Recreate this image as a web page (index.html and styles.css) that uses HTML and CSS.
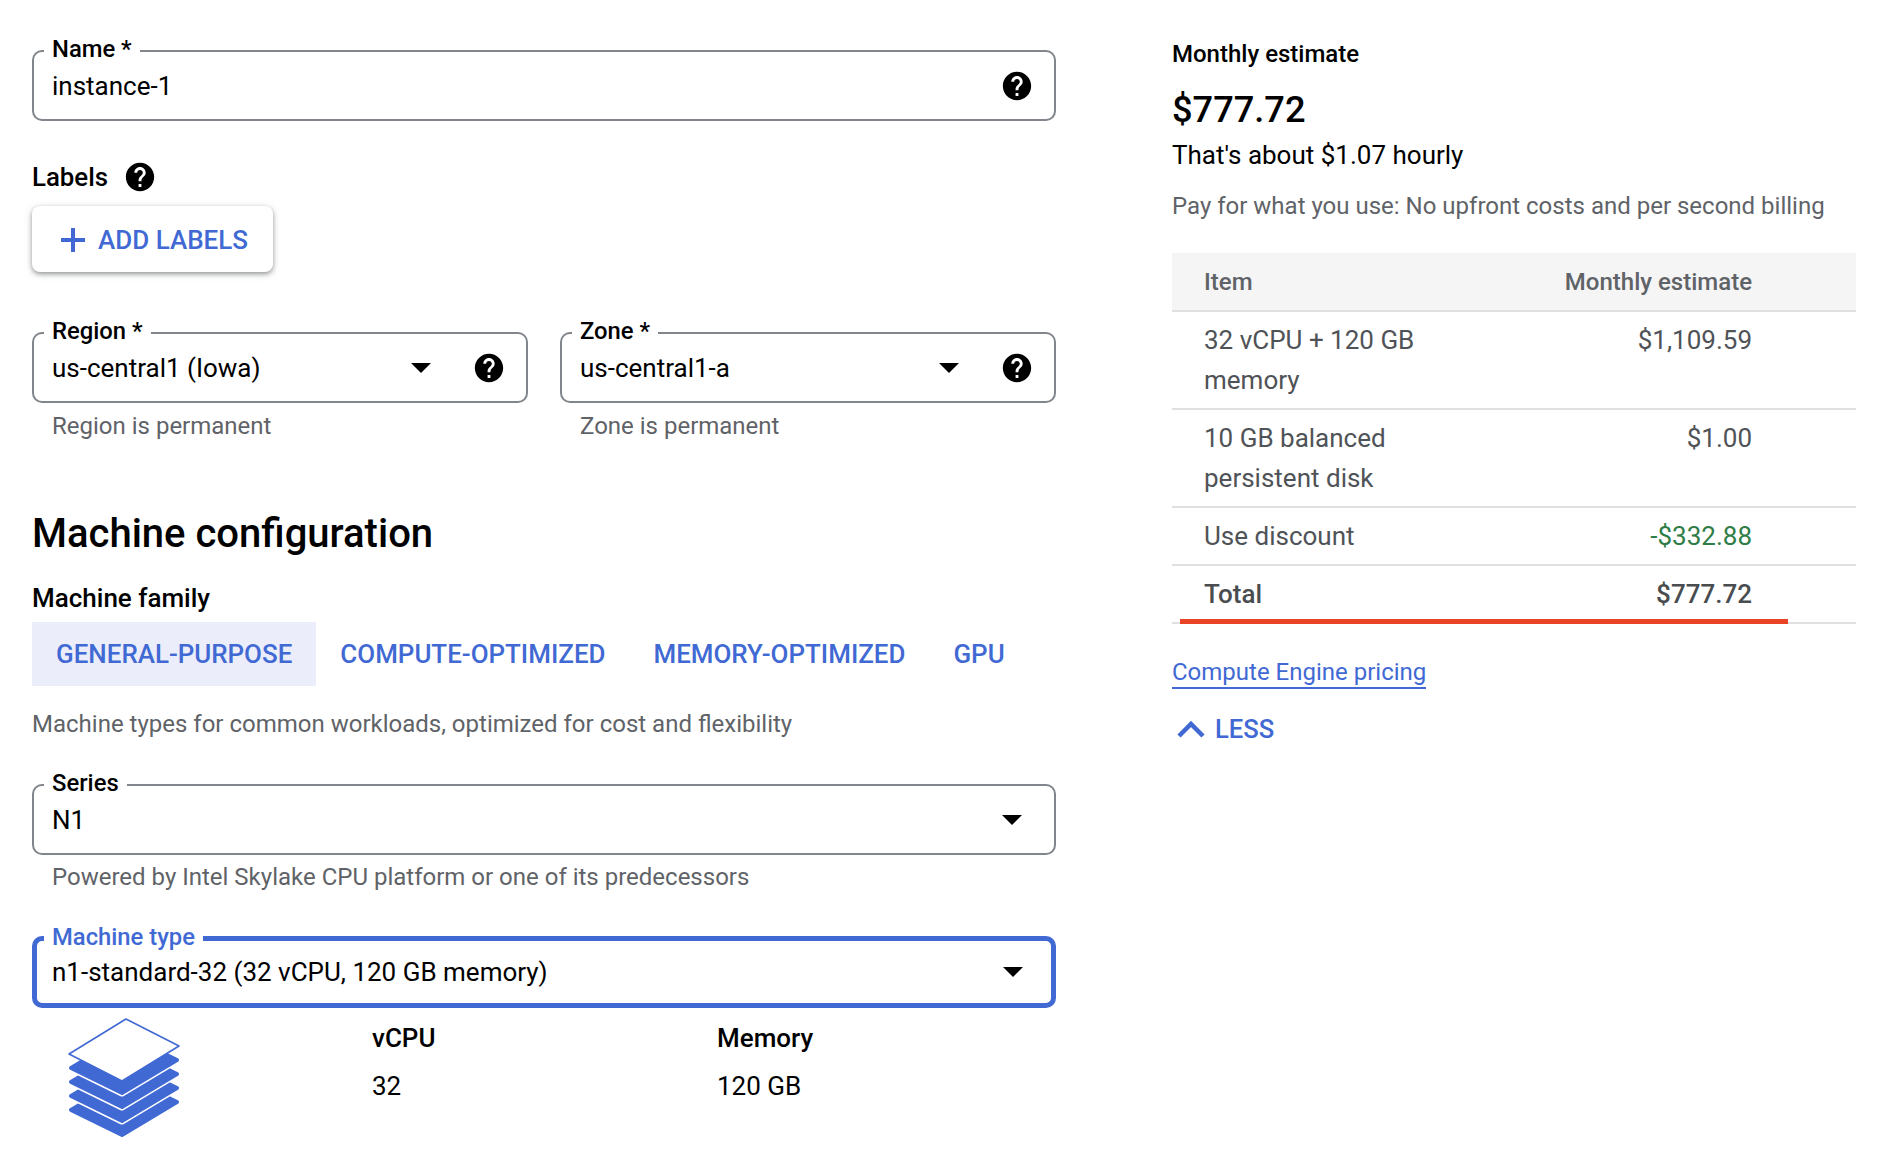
FILE: index.html
```html
<!DOCTYPE html>
<html>
<head>
  <meta charset="utf-8">
  <title>Create an instance</title>
  <link rel="stylesheet" href="styles.css">
</head>
<body>
  <svg class="defs" width="0" height="0">
    <defs>
      <symbol id="help" viewBox="0 0 24 24"><path d="M12 2C6.48 2 2 6.48 2 12s4.48 10 10 10 10-4.48 10-10S17.52 2 12 2zm1 17h-2v-2h2v2zm2.07-7.75l-.9.92C13.45 12.9 13 13.5 13 15h-2v-.5c0-1.1.45-2.1 1.17-2.83l1.24-1.26c.37-.36.59-.86.59-1.41 0-1.1-.9-2-2-2s-2 .9-2 2H8c0-2.21 1.79-4 4-4s4 1.79 4 4c0 .88-.36 1.68-.93 2.25z"/></symbol>
      <g id="layer">
        <polygon class="layer-gap" points="66,6 117,31 62,64 11,39"/>
        <polygon class="layer-fill" points="66,6 117,31 62,64 11,39"/>
      </g>
    </defs>
  </svg>

  <main class="form">
    <fieldset class="field field-name">
      <legend>Name *</legend>
      <span class="value">instance-1</span>
      <svg class="help"><use href="#help"/></svg>
    </fieldset>

    <div class="labels-head">
      <span>Labels</span>
      <svg class="help"><use href="#help"/></svg>
    </div>
    <button class="add-btn">
      <svg class="plus" viewBox="0 0 24 24"><path d="M10 0h4v10h10v4H14v10h-4V14H0v-4h10z"/></svg>
      ADD LABELS
    </button>

    <div class="field-row">
      <div class="field-col">
        <fieldset class="field">
          <legend>Region *</legend>
          <span class="value">us-central1 (Iowa)</span>
          <i class="caret caret-help"></i>
          <svg class="help"><use href="#help"/></svg>
        </fieldset>
        <p class="hint">Region is permanent</p>
      </div>
      <div class="field-col">
        <fieldset class="field">
          <legend>Zone *</legend>
          <span class="value">us-central1-a</span>
          <i class="caret caret-help"></i>
          <svg class="help"><use href="#help"/></svg>
        </fieldset>
        <p class="hint">Zone is permanent</p>
      </div>
    </div>

    <h2 class="section-title">Machine configuration</h2>
    <div class="sub-title">Machine family</div>
    <div class="tabs">
      <a class="tab active">GENERAL-PURPOSE</a>
      <a class="tab">COMPUTE-OPTIMIZED</a>
      <a class="tab">MEMORY-OPTIMIZED</a>
      <a class="tab">GPU</a>
    </div>
    <p class="tab-note">Machine types for common workloads, optimized for cost and flexibility</p>

    <fieldset class="field field-series">
      <legend>Series</legend>
      <span class="value">N1</span>
      <i class="caret"></i>
    </fieldset>
    <p class="hint">Powered by Intel Skylake CPU platform or one of its predecessors</p>

    <fieldset class="field field-focus">
      <legend>Machine type</legend>
      <span class="value">n1-standard-32 (32 vCPU, 120 GB memory)</span>
      <i class="caret"></i>
    </fieldset>

    <div class="specs">
      <svg class="stack" viewBox="0 0 130 125">
        <use href="#layer" y="56"/>
        <use href="#layer" y="42"/>
        <use href="#layer" y="28"/>
        <use href="#layer" y="14"/>
        <polygon class="layer-top" points="66,4 119,31 62,66 9,39"/>
      </svg>
      <div class="spec">
        <div class="spec-name">vCPU</div>
        <div class="spec-value">32</div>
      </div>
      <div class="spec">
        <div class="spec-name">Memory</div>
        <div class="spec-value">120 GB</div>
      </div>
    </div>
  </main>

  <aside class="estimate">
    <div class="est-label">Monthly estimate</div>
    <div class="est-price">$777.72</div>
    <div class="est-hourly">That's about $1.07 hourly</div>
    <p class="est-note">Pay for what you use: No upfront costs and per second billing</p>

    <div class="table-wrap">
      <table class="cost">
        <thead>
          <tr><th>Item</th><th class="num">Monthly estimate</th></tr>
        </thead>
        <tbody>
          <tr><td>32 vCPU + 120 GB memory</td><td class="num">$1,109.59</td></tr>
          <tr><td>10 GB balanced persistent disk</td><td class="num">$1.00</td></tr>
          <tr class="short"><td>Use discount</td><td class="num discount">-$332.88</td></tr>
          <tr class="short total"><td>Total</td><td class="num">$777.72</td></tr>
        </tbody>
      </table>
      <div class="red-line"></div>
    </div>

    <a class="pricing">Compute Engine pricing</a>
    <a class="less">
      <svg class="chevron" viewBox="0 0 28 18"><path d="M2 16 14 4l12 12"/></svg>
      LESS
    </a>
  </aside>
</body>
</html>
```

FILE: styles.css
```css
* { box-sizing: border-box; }

html { background: #fff; }

body {
  margin: 0;
  width: 1882px;
  height: 1154px;
  overflow: hidden;
  display: flex;
  padding-left: 32px;
  font-family: Roboto, "Liberation Sans", sans-serif;
  font-size: 24px;
  color: #000;
}

.defs { position: absolute; }

.form { width: 1024px; padding-top: 37px; }

.estimate { width: 684px; margin-left: 116px; padding-top: 39px; }

/* outlined fields */
.field {
  display: flex;
  align-items: center;
  margin: 0;
  padding: 0 20px 12px 18px;
  height: 84px;
  border: 2px solid #80868b;
  border-radius: 10px;
}
.field legend {
  padding: 0 8px 2px;
  margin-left: -8px;
  font-size: 23.8px;
  line-height: 25px;
  font-weight: 500;
}
.field .value {
  flex: 1;
  font-size: 26px;
}

.help { width: 34px; height: 34px; fill: #000; flex: none; }

.caret {
  flex: none;
  width: 0;
  height: 0;
  border-left: 10px solid transparent;
  border-right: 10px solid transparent;
  border-top: 10px solid #000;
  margin-right: 12px;
}
.caret-help { margin-right: 41px; }

.labels-head {
  display: flex;
  align-items: center;
  gap: 15px;
  margin-top: 39px;
  height: 34px;
  font-size: 25.8px;
  font-weight: 500;
}

.add-btn {
  display: flex;
  align-items: center;
  gap: 13px;
  width: 241px;
  height: 66px;
  margin-top: 12px;
  padding: 2px 0 0 29px;
  border: 0;
  border-radius: 8px;
  background: #fff;
  box-shadow: 0 2px 4px rgba(60, 64, 67, .45), 0 2px 9px rgba(60, 64, 67, .18);
  color: #4169d4;
  font: 500 26px Roboto, sans-serif;
}
.plus { width: 24px; height: 24px; fill: #4169d4; }

.field-row { display: flex; gap: 32px; margin-top: 47px; }
.field-col { flex: 1; min-width: 0; }

.hint {
  margin: 7px 0 0 20px;
  font-size: 24px;
  line-height: 30px;
  color: #5f6368;
}
.field-col .hint { margin-top: 8px; }

.section-title {
  margin: 70px 0 0;
  font-size: 40px;
  line-height: 46px;
  font-weight: 500;
}

.sub-title {
  margin-top: 26px;
  font-size: 26px;
  line-height: 30px;
  font-weight: 500;
}

.tabs { display: flex; margin-top: 9px; }
.tab {
  display: flex;
  align-items: center;
  height: 64px;
  padding: 0 24px;
  color: #4169d4;
  font-size: 25.95px;
  font-weight: 500;
}
.tab.active { background: #ebeefa; }

.tab-note {
  margin: 23px 0 0;
  font-size: 24px;
  line-height: 30px;
  color: #5f6368;
}

.field-series { margin-top: 32px; }

.field-focus {
  margin-top: 33px;
  height: 83px;
  padding: 0 16px 11px 15px;
  border: 5px solid #4169d4;
}
.field-focus legend { color: #4169d4; }

.specs { display: flex; gap: 45px; padding-left: 28px; margin-top: 7px; }
.stack { width: 130px; height: 125px; flex: none; margin-right: 137px; }
.layer-gap { fill: #fff; stroke: #fff; stroke-width: 7; stroke-linejoin: round; }
.layer-fill { fill: #4169d4; stroke: #4169d4; stroke-width: 4; stroke-linejoin: round; }
.layer-top { fill: #fff; stroke: #4169d4; stroke-width: 1.6; stroke-linejoin: round; }

.spec { width: 300px; padding-top: 8px; }
.spec-name { font-size: 26px; line-height: 30px; font-weight: 500; }
.spec-value { font-size: 26px; line-height: 30px; margin-top: 18px; }

/* right column */
.est-label { font-size: 24px; line-height: 30px; font-weight: 500; }
.est-price { margin-top: 18px; font-size: 36.2px; line-height: 46px; font-weight: 500; }
.est-hourly { margin-top: 6px; font-size: 26px; line-height: 32px; }
.est-note { margin: 20px 0 0; font-size: 24px; line-height: 30px; color: #5f6368; }

.table-wrap { position: relative; margin-top: 32px; }

.cost { width: 100%; border-collapse: collapse; color: #4f5357; font-size: 26px; }
.cost th {
  height: 58px;
  padding: 0 0 0 32px;
  background: #f5f5f5;
  text-align: left;
  font-weight: 500;
  font-size: 24px;
  color: #5f6368;
  border-bottom: 2px solid #e0e0e0;
}
.cost td {
  padding: 8px 0 8px 32px;
  line-height: 40px;
  vertical-align: top;
  border-bottom: 2px solid #e0e0e0;
}
.cost th:first-child, .cost td:first-child { width: 300px; padding-right: 20px; }
.cost .num { padding: 0 104px 0 0; text-align: right; }
.cost td.num { padding-top: 8px; padding-bottom: 8px; }
.cost .discount { color: #2e7d46; }
.cost .short td { height: 58px; padding-top: 0; padding-bottom: 0; vertical-align: middle; }
.cost .total td { font-weight: 500; color: #4a4d50; }

/* annotation drawn over the total row */
.red-line {
  position: absolute;
  left: 8px;
  bottom: 0;
  width: 608px;
  height: 5px;
  background: #ea4426;
}

.pricing {
  display: inline-block;
  margin-top: 33px;
  font-size: 24px;
  line-height: 30px;
  color: #4169d4;
  border-bottom: 2px solid #4169d4;
}

.less {
  display: flex;
  align-items: center;
  gap: 10px;
  margin-top: 25px;
  padding-left: 5px;
  color: #4169d4;
  font-size: 25.6px;
  font-weight: 500;
}
.chevron { width: 28px; height: 18px; fill: none; stroke: #4169d4; stroke-width: 4.5; }
```
